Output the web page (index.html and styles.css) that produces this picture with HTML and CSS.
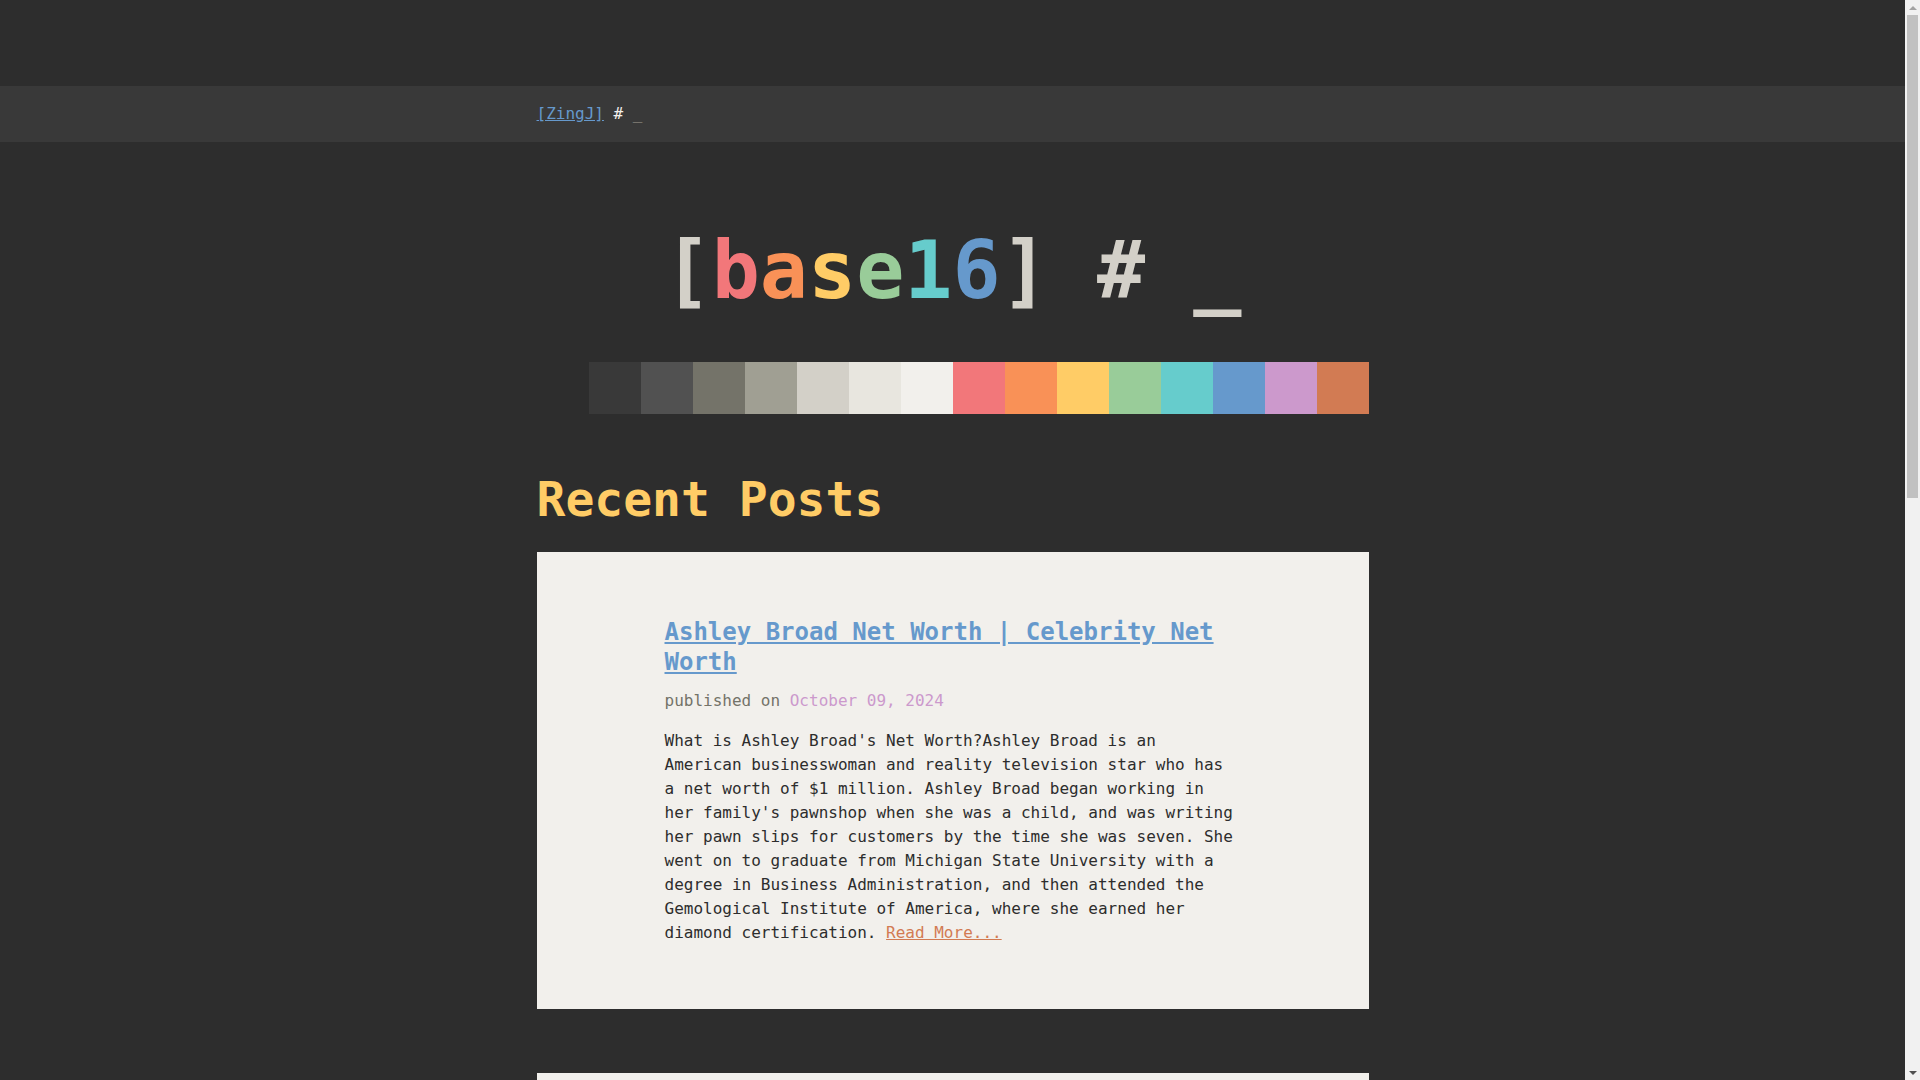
FILE: index.html
```html
<!DOCTYPE html>
<html lang="en">
<head>
    <meta charset="UTF-8">
    <meta name="viewport" content="width=device-width, initial-scale=1.0">
    <title>[ZingJ] # _</title>
    <link rel="stylesheet" href="styles.css">
</head>
<body>
    <nav class="topbar">
        <div class="wrap">
            <a href="#" class="brand">[ZingJ]</a> <span class="hash">#</span> <span class="cursor">_</span>
        </div>
    </nav>

    <div class="wrap">
        <header class="masthead">
            <h1 class="logo"><span class="c5">[</span><span class="c8">b</span><span class="c9">a</span><span class="ca">s</span><span class="cb">e</span><span class="cc">1</span><span class="cd">6</span><span class="c5">]</span> <span class="c5">#</span> <span class="c5">_</span></h1>
            <div class="palette">
                <span class="b00"></span>
                <span class="b01"></span>
                <span class="b02"></span>
                <span class="b03"></span>
                <span class="b04"></span>
                <span class="b05"></span>
                <span class="b06"></span>
                <span class="b07"></span>
                <span class="b08"></span>
                <span class="b09"></span>
                <span class="b0a"></span>
                <span class="b0b"></span>
                <span class="b0c"></span>
                <span class="b0d"></span>
                <span class="b0e"></span>
                <span class="b0f"></span>
            </div>
        </header>

        <h2 class="section-title">Recent Posts</h2>

        <article class="post">
            <h3 class="post-title"><a href="#">Ashley Broad Net Worth | Celebrity Net Worth</a></h3>
            <p class="post-meta">published on <span class="post-date">October 09, 2024</span></p>
            <p class="post-excerpt">What is Ashley Broad's Net Worth?Ashley Broad is an American businesswoman and reality television star who has a net worth of $1 million. Ashley Broad began working in her family's pawnshop when she was a child, and was writing her pawn slips for customers by the time she was seven. She went on to graduate from Michigan State University with a degree in Business Administration, and then attended the Gemological Institute of America, where she earned her diamond certification. <a href="#" class="more">Read More...</a></p>
        </article>

        <article class="post">
            <h3 class="post-title"><a href="#">Les Gold Net Worth | Celebrity Net Worth</a></h3>
            <p class="post-meta">published on <span class="post-date">October 08, 2024</span></p>
            <p class="post-excerpt">What is Les Gold's Net Worth?Les Gold is an American businessman and reality television star who has a net worth of $10 million. Les Gold is best known for being the owner of American Jewelry and Loan, a pawn shop located in Detroit, Michigan. He has starred on the truTV reality series "Hardcore Pawn" alongside his children Seth and Ashley, and has written a book about his life in the pawn business. <a href="#" class="more">Read More...</a></p>
        </article>

        <article class="post">
            <h3 class="post-title"><a href="#">Seth Gold Net Worth | Celebrity Net Worth</a></h3>
            <p class="post-meta">published on <span class="post-date">October 07, 2024</span></p>
            <p class="post-excerpt">What is Seth Gold's Net Worth?Seth Gold is an American businessman and reality television star who has a net worth of $2 million. Seth Gold is best known for appearing on the truTV series "Hardcore Pawn" with his father Les and his sister Ashley. He grew up working in the family store in Detroit and later helped bring the business online, expanding its reach well beyond the city. <a href="#" class="more">Read More...</a></p>
        </article>

        <footer class="pager">
            <a href="#">Older Posts &raquo;</a>
        </footer>
    </div>

    <!-- window scrollbar, as it shows in the screenshot -->
    <div class="scrollbar">
        <div class="sb-btn"><span class="arrow-up"></span></div>
        <div class="sb-track"><div class="sb-thumb"></div></div>
        <div class="sb-btn"><span class="arrow-down"></span></div>
    </div>
</body>
</html>
```

FILE: styles.css
```css
body {
    margin: 0;
    padding: 86px 15px 0 0;
    background-color: #2d2d2d;
    color: #d3d0c8;
    font-family: "DejaVu Sans Mono", "Liberation Mono", monospace;
    font-size: 16px;
    line-height: 24px;
}
.wrap {
    max-width: 832px;
    margin: 0 auto;
}
a {
    color: #6699cc;
}

/* top bar */
.topbar {
    background-color: #393939;
    padding: 16px 0;
    margin-right: -15px;
    padding-right: 15px;
}
.topbar .hash {
    color: #f2f0ec;
}
.topbar .cursor {
    color: #a09f93;
}

/* masthead */
.logo {
    margin: 81px 0 43px;
    text-align: center;
    font-size: 80px;
    line-height: 96px;
    font-weight: bold;
}
.c5 { color: #d3d0c8; }
.c8 { color: #f2777a; }
.c9 { color: #f99157; }
.ca { color: #ffcc66; }
.cb { color: #99cc99; }
.cc { color: #66cccc; }
.cd { color: #6699cc; }

.palette {
    display: flex;
    height: 52px;
}
.palette span {
    flex: 1;
}
.b00 { background-color: #2d2d2d; }
.b01 { background-color: #393939; }
.b02 { background-color: #515151; }
.b03 { background-color: #747369; }
.b04 { background-color: #a09f93; }
.b05 { background-color: #d3d0c8; }
.b06 { background-color: #e8e6df; }
.b07 { background-color: #f2f0ec; }
.b08 { background-color: #f2777a; }
.b09 { background-color: #f99157; }
.b0a { background-color: #ffcc66; }
.b0b { background-color: #99cc99; }
.b0c { background-color: #66cccc; }
.b0d { background-color: #6699cc; }
.b0e { background-color: #cc99cc; }
.b0f { background-color: #d27b53; }

/* posts */
.section-title {
    margin: 57px 0 25px;
    color: #ffcc66;
    font-size: 48px;
    line-height: 56px;
    font-weight: bold;
}
.post {
    background-color: #f2f0ec;
    color: #2d2d2d;
    padding: 65px 128px 64px;
    margin-bottom: 64px;
}
.post-title {
    margin: 0 0 12px;
    font-size: 24px;
    line-height: 30px;
    font-weight: bold;
}
.post-meta {
    margin: 0 0 16px;
    color: #747369;
}
.post-date {
    color: #cc99cc;
}
.post-excerpt {
    margin: 0;
}
.post-excerpt .more {
    color: #d27b53;
}
.pager {
    padding: 0 0 120px;
    text-align: right;
}

/* scrollbar */
.scrollbar {
    position: fixed;
    top: 0;
    right: 0;
    width: 15px;
    height: 100vh;
    background-color: #f1f1f1;
    display: flex;
    flex-direction: column;
}
.sb-btn {
    height: 15px;
    display: flex;
    align-items: center;
    justify-content: center;
}
.sb-track {
    flex: 1;
    padding: 0 2px;
}
.sb-thumb {
    height: 483px;
    background-color: #c1c1c1;
}
.arrow-up {
    border-left: 4px solid transparent;
    border-right: 4px solid transparent;
    border-bottom: 4px solid #a3a3a3;
}
.arrow-down {
    border-left: 4px solid transparent;
    border-right: 4px solid transparent;
    border-top: 4px solid #505050;
}
```
